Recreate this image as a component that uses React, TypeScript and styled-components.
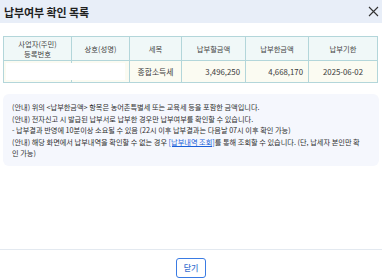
import styled, { createGlobalStyle } from 'styled-components';

interface PaymentRow {
	bizNo: string;
	name: string;
	taxItem: string;
	dueAmount: string;
	paidAmount: string;
	dueDate: string;
}

const rows: PaymentRow[] = [
	{
		bizNo: '',
		name: '',
		taxItem: '종합소득세',
		dueAmount: '3,496,250',
		paidAmount: '4,668,170',
		dueDate: '2025-06-02',
	},
];

const GlobalStyle = createGlobalStyle`
	html, body {
		margin: 0;
		padding: 0;
		background: #fff;
	}

	body {
		font-family: 'Noto Sans CJK KR', 'Noto Sans', sans-serif;
		color: #333;
	}
`;

function App() {
	return (
		<>
			<GlobalStyle />
			<Dialog>
				<Header>
					<Title>납부여부 확인 목록</Title>
					<CloseButton aria-label="닫기">
						<svg width="11" height="11" viewBox="0 0 11 11">
							<path d="M1 1L10 10M10 1L1 10" stroke="#333" strokeWidth="1.1" />
						</svg>
					</CloseButton>
				</Header>

				<Body>
					<Table>
						<colgroup>
							<col style={{ width: 68 }} />
							<col style={{ width: 58 }} />
							<col style={{ width: 52 }} />
							<col style={{ width: 64 }} />
							<col style={{ width: 63 }} />
							<col style={{ width: 69 }} />
						</colgroup>
						<thead>
							<tr>
								<HeaderCell>
									사업자(주민)
									<br />
									등록번호
								</HeaderCell>
								<HeaderCell>상호(성명)</HeaderCell>
								<HeaderCell>세목</HeaderCell>
								<HeaderCell>납부할금액</HeaderCell>
								<HeaderCell>납부한금액</HeaderCell>
								<HeaderCell>납부기한</HeaderCell>
							</tr>
						</thead>
						<tbody>
							{rows.map((row) => (
								<tr key={row.dueDate}>
									<Cell>
										<Masked />
									</Cell>
									<Cell>
										<Masked $short />
									</Cell>
									<Cell>{row.taxItem}</Cell>
									<Cell $align="right">{row.dueAmount}</Cell>
									<Cell $align="right">{row.paidAmount}</Cell>
									<Cell>{row.dueDate}</Cell>
								</tr>
							))}
						</tbody>
					</Table>

					<Notice>
						<p>(안내) 위의 &lt;납부한금액&gt; 항목은 농어촌특별세 또는 교육세 등을 포함한 금액입니다.</p>
						<p>(안내) 전자신고 시 발급된 납부서로 납부한 경우만 납부여부를 확인할 수 있습니다.</p>
						<p>- 납부결과 반영에 10분이상 소요될 수 있음 (22시 이후 납부결과는 다음날 07시 이후 확인 가능)</p>
						<p>
							(안내) 해당 화면에서 납부내역을 확인할 수 없는 경우 <NoticeLink href="#">[납부내역 조회]</NoticeLink>를 통해
							조회할 수 있습니다. (단, 납세자 본인만 확인 가능)
						</p>
					</Notice>
				</Body>

				<Footer>
					<OutlineButton>닫기</OutlineButton>
				</Footer>
			</Dialog>
		</>
	);
}

export default App;

const Dialog = styled.div`
	width: 382px;
	height: 279px;
	display: flex;
	flex-direction: column;
	background: #fff;
	overflow: hidden;
`;

const Header = styled.div`
	height: 23px;
	flex: none;
	display: flex;
	align-items: center;
	justify-content: space-between;
	padding: 0 2px 0 4px;
	background: #e8eef8;
`;

const Title = styled.h1`
	margin: 0;
	font-size: 11px;
	font-weight: 700;
	color: #1f1f1f;
	letter-spacing: -0.1px;
`;

const CloseButton = styled.button`
	display: flex;
	align-items: center;
	justify-content: center;
	width: 14px;
	height: 14px;
	padding: 0;
	border: none;
	background: none;
`;

const Body = styled.div`
	flex: 1;
	min-height: 0;
	padding: 13px 4px 0 3px;
	display: flex;
	flex-direction: column;
	gap: 11px;
`;

const Table = styled.table`
	width: 374px;
	border-collapse: collapse;
	table-layout: fixed;
	font-size: 7.3px;
	color: #444;
`;

const HeaderCell = styled.th`
	height: 23px;
	padding: 0;
	border: 1px solid #b3d6da;
	background: #f0f8f8;
	font-weight: 400;
	line-height: 10px;
	text-align: center;
`;

const Cell = styled.td<{ $align?: 'right' | 'center' }>`
	height: 21px;
	padding: 0 5px;
	border: 1px solid #b3d6da;
	background: #fbfbf2;
	text-align: ${({ $align }) => $align ?? 'center'};
	font-size: 7.8px;
	color: #3a3a3a;
	position: relative;
`;

const Masked = styled.div<{ $short?: boolean }>`
	position: absolute;
	top: 2px;
	bottom: 2px;
	left: ${({ $short }) => ($short ? '-1px' : '2px')};
	right: ${({ $short }) => ($short ? '4px' : '-2px')};
	background: #fff;
`;

const Notice = styled.div`
	width: 376px;
	box-sizing: border-box;
	padding: 8px 14px 6px 9px;
	border-radius: 6px;
	background: #f5f7fd;
	font-size: 7.2px;
	line-height: 11.5px;
	color: #2f2f2f;
	word-break: break-all;

	p {
		margin: 0;
	}
`;

const NoticeLink = styled.a`
	color: #1a5fd8;
	text-decoration: underline;
`;

const Footer = styled.div`
	flex: none;
	height: 30px;
	display: flex;
	justify-content: center;
	align-items: flex-start;
	padding-top: 8px;
	border-top: 1px solid #e3e9f0;
	box-sizing: border-box;
`;

const OutlineButton = styled.button`
	width: 30px;
	height: 20px;
	padding: 0;
	border: 1px solid #3a7be3;
	border-radius: 3px;
	background: #fff;
	color: #3a6fd0;
	font-family: inherit;
	font-size: 8px;
	font-weight: 500;
	line-height: 18px;
`;
